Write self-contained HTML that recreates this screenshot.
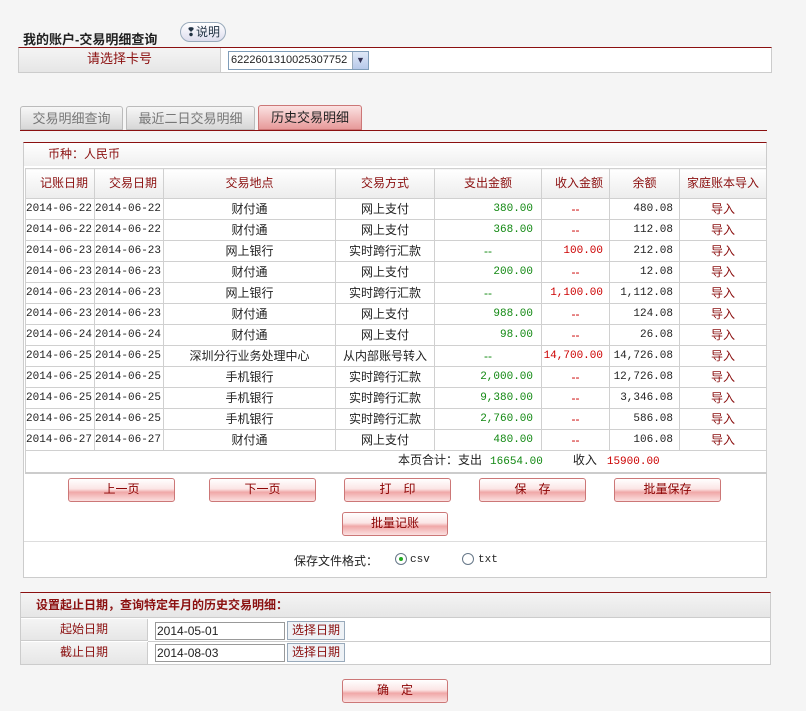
<!DOCTYPE html>
<html><head><meta charset="utf-8"><style>
*{box-sizing:border-box;margin:0;padding:0}
body{width:806px;height:711px;background:#f5f5f5;font:12px "Liberation Sans","Noto Sans CJK SC",sans-serif;color:#222;position:relative;overflow:hidden}
.a{position:absolute}
.red{color:#8b1010}
.lbl{background:linear-gradient(#f4f4f4,#e6e6e6);}
.btn{position:absolute;height:24px;border:1px solid #c77;border-radius:3px;background:linear-gradient(#fff 0%,#fbe5e5 45%,#f0a8a8 60%,#fbe0e0 100%);color:#8b0000;text-align:center;line-height:20px;font-size:12px}
table{border-collapse:collapse;position:absolute;table-layout:fixed}
td{border:1px solid #d0d0d0;height:21px;font-size:12px;white-space:nowrap;line-height:19px;overflow:hidden}
.m{font-family:"Liberation Mono",monospace;font-size:11px}
.g{color:#118811;text-align:right;padding-right:8px;font-family:"Liberation Mono",monospace;font-size:11px}
.r{color:#c00;text-align:right;padding-right:6px;font-family:"Liberation Mono",monospace;font-size:11px}
.n{text-align:right;padding-right:6px}
.nm{text-align:right;padding-right:6px;font-family:"Liberation Mono",monospace;font-size:11px}
.c{text-align:center}
.d{text-align:center;color:#c00}
.h td{height:30px;background:linear-gradient(#fff,#ececec);color:#8b1010;font-size:12px}
.imp{text-align:center;color:#8b1010}
</style></head><body>
<div class="a" style="left:23px;top:29px;font-weight:bold;font-size:13px">我的账户-交易明细查询</div>
<div class="a" style="left:180px;top:22px;width:46px;height:20px;border:1px solid #9ab;border-radius:10px;background:linear-gradient(#fff,#dde);font-size:12px;line-height:18px;text-align:center;color:#234">❢说明</div>
<div class="a" style="left:18px;top:47px;width:754px;height:26px;background:#fff;border:1px solid #ccc;border-top:1px solid #8b1010"></div>
<div class="a lbl red" style="left:19px;top:48px;width:202px;height:24px;text-align:center;line-height:22px;font-size:13px;border-right:1px solid #ccc">请选择卡号</div>
<div class="a" style="left:228px;top:51px;width:141px;height:19px;border:1px solid #7f9db9;background:#fff;font-size:11px;line-height:17px;padding-left:2px;overflow:hidden;white-space:nowrap">6222601310025307752</div>
<div class="a" style="left:352px;top:52px;width:16px;height:17px;background:linear-gradient(#dfe8f7,#b7c9ea);border-left:1px solid #9ab;text-align:center;font-size:9px;line-height:17px;color:#335">▼</div>

<div class="a" style="left:20px;top:106px;width:103px;height:24px;border:1px solid #bbb;border-radius:3px 3px 0 0;background:linear-gradient(#f7f7f7,#d7d7d7);color:#777;text-align:center;line-height:23px;font-size:13px">交易明细查询</div>
<div class="a" style="left:126px;top:106px;width:129px;height:24px;border:1px solid #bbb;border-radius:3px 3px 0 0;background:linear-gradient(#f7f7f7,#d7d7d7);color:#777;text-align:center;line-height:23px;font-size:13px">最近二日交易明细</div>
<div class="a" style="left:258px;top:105px;width:104px;height:25px;border:1px solid #c77;border-radius:3px 3px 0 0;background:linear-gradient(#fbe2e2,#e79a9a);color:#222;text-align:center;line-height:24px;font-size:13px">历史交易明细</div>
<div class="a" style="left:20px;top:130px;width:747px;height:1px;background:#8b1010"></div>

<div class="a" style="left:23px;top:142px;width:744px;height:436px;background:#fff;border:1px solid #ccc;border-top:1px solid #8b1010"></div>
<div class="a red" style="left:24px;top:143px;width:742px;height:23px;background:linear-gradient(#fff,#efefef);padding-left:24px;line-height:23px;font-size:12px">币种：人民币</div>

<table style="left:25px;top:168px;width:741px">
<colgroup><col style="width:69px"><col style="width:69px"><col style="width:172px"><col style="width:99px"><col style="width:107px"><col style="width:68px"><col style="width:70px"><col style="width:87px"></colgroup>
<tr class="h"><td class="n">记账日期</td><td class="n">交易日期</td><td class="c">交易地点</td><td class="c">交易方式</td><td class="c">支出金额</td><td class="n">收入金额</td><td class="c">余额</td><td class="c">家庭账本导入</td></tr>
<tr><td class="m">2014-06-22</td><td class="m">2014-06-22</td><td class="c">财付通</td><td class="c">网上支付</td><td class="g">380.00</td><td class="d">--</td><td class="nm">480.08</td><td class="imp">导入</td></tr>
<tr><td class="m">2014-06-22</td><td class="m">2014-06-22</td><td class="c">财付通</td><td class="c">网上支付</td><td class="g">368.00</td><td class="d">--</td><td class="nm">112.08</td><td class="imp">导入</td></tr>
<tr><td class="m">2014-06-23</td><td class="m">2014-06-23</td><td class="c">网上银行</td><td class="c">实时跨行汇款</td><td class="c" style="color:#181">--</td><td class="r">100.00</td><td class="nm">212.08</td><td class="imp">导入</td></tr>
<tr><td class="m">2014-06-23</td><td class="m">2014-06-23</td><td class="c">财付通</td><td class="c">网上支付</td><td class="g">200.00</td><td class="d">--</td><td class="nm">12.08</td><td class="imp">导入</td></tr>
<tr><td class="m">2014-06-23</td><td class="m">2014-06-23</td><td class="c">网上银行</td><td class="c">实时跨行汇款</td><td class="c" style="color:#181">--</td><td class="r">1,100.00</td><td class="nm">1,112.08</td><td class="imp">导入</td></tr>
<tr><td class="m">2014-06-23</td><td class="m">2014-06-23</td><td class="c">财付通</td><td class="c">网上支付</td><td class="g">988.00</td><td class="d">--</td><td class="nm">124.08</td><td class="imp">导入</td></tr>
<tr><td class="m">2014-06-24</td><td class="m">2014-06-24</td><td class="c">财付通</td><td class="c">网上支付</td><td class="g">98.00</td><td class="d">--</td><td class="nm">26.08</td><td class="imp">导入</td></tr>
<tr><td class="m">2014-06-25</td><td class="m">2014-06-25</td><td class="c">深圳分行业务处理中心</td><td class="c">从内部账号转入</td><td class="c" style="color:#181">--</td><td class="r">14,700.00</td><td class="nm">14,726.08</td><td class="imp">导入</td></tr>
<tr><td class="m">2014-06-25</td><td class="m">2014-06-25</td><td class="c">手机银行</td><td class="c">实时跨行汇款</td><td class="g">2,000.00</td><td class="d">--</td><td class="nm">12,726.08</td><td class="imp">导入</td></tr>
<tr><td class="m">2014-06-25</td><td class="m">2014-06-25</td><td class="c">手机银行</td><td class="c">实时跨行汇款</td><td class="g">9,380.00</td><td class="d">--</td><td class="nm">3,346.08</td><td class="imp">导入</td></tr>
<tr><td class="m">2014-06-25</td><td class="m">2014-06-25</td><td class="c">手机银行</td><td class="c">实时跨行汇款</td><td class="g">2,760.00</td><td class="d">--</td><td class="nm">586.08</td><td class="imp">导入</td></tr>
<tr><td class="m">2014-06-27</td><td class="m">2014-06-27</td><td class="c">财付通</td><td class="c">网上支付</td><td class="g">480.00</td><td class="d">--</td><td class="nm">106.08</td><td class="imp">导入</td></tr>
<tr><td colspan="8" style="border-bottom:2px solid #ccc"><span style="margin-left:372px">本页合计：支出</span><span class="m" style="color:#181;margin-left:8px">16654.00</span><span style="margin-left:30px">收入</span><span class="m" style="color:#c00;margin-left:10px">15900.00</span></td></tr>
</table>

<div class="btn" style="left:68px;top:478px;width:107px">上一页</div>
<div class="btn" style="left:209px;top:478px;width:107px">下一页</div>
<div class="btn" style="left:344px;top:478px;width:107px">打　印</div>
<div class="btn" style="left:479px;top:478px;width:107px">保　存</div>
<div class="btn" style="left:614px;top:478px;width:107px">批量保存</div>
<div class="btn" style="left:342px;top:512px;width:106px">批量记账</div>
<div class="a" style="left:24px;top:541px;width:742px;height:1px;background:#ddd"></div>
<div class="a" style="left:294px;top:552px;font-size:12px">保存文件格式：</div>
<div class="a" style="left:395px;top:553px;width:12px;height:12px;border:1px solid #678;border-radius:50%;background:#fff"><div style="width:4px;height:4px;background:#2a2;border-radius:50%;margin:3px"></div></div>
<div class="a" style="left:410px;top:554px;font-size:11px;font-family:'Liberation Mono',monospace">csv</div>
<div class="a" style="left:462px;top:553px;width:12px;height:12px;border:1px solid #678;border-radius:50%;background:#fff"></div>
<div class="a" style="left:478px;top:554px;font-size:11px;font-family:'Liberation Mono',monospace">txt</div>

<div class="a" style="left:20px;top:592px;width:751px;height:73px;background:#fff;border:1px solid #ccc;border-top:1px solid #8b1010"></div>
<div class="a red lbl" style="left:21px;top:593px;width:749px;height:25px;padding-left:15px;line-height:24px;font-weight:bold;font-size:12px;border-bottom:1px solid #ccc">设置起止日期，查询特定年月的历史交易明细：</div>
<div class="a red lbl" style="left:21px;top:619px;width:127px;height:22px;text-align:center;line-height:21px;border-right:1px solid #ccc;border-bottom:1px solid #ccc">起始日期</div>
<div class="a" style="left:148px;top:641px;width:622px;height:1px;background:#ccc"></div>
<div class="a red lbl" style="left:21px;top:642px;width:127px;height:22px;text-align:center;line-height:21px;border-right:1px solid #ccc">截止日期</div>
<div class="a" style="left:155px;top:622px;width:130px;height:18px;border:1px solid #999;background:#fff;padding-left:1px;line-height:16px">2014-05-01</div>
<div class="a" style="left:287px;top:621px;width:58px;height:19px;border:1px solid #9ab;background:#eef2f6;line-height:17px;text-align:center;color:#8b1010">选择日期</div>
<div class="a" style="left:155px;top:644px;width:130px;height:18px;border:1px solid #999;background:#fff;padding-left:1px;line-height:16px">2014-08-03</div>
<div class="a" style="left:287px;top:643px;width:58px;height:19px;border:1px solid #9ab;background:#eef2f6;line-height:17px;text-align:center;color:#8b1010">选择日期</div>
<div class="btn" style="left:342px;top:679px;width:106px">确　定</div>
</body></html>
